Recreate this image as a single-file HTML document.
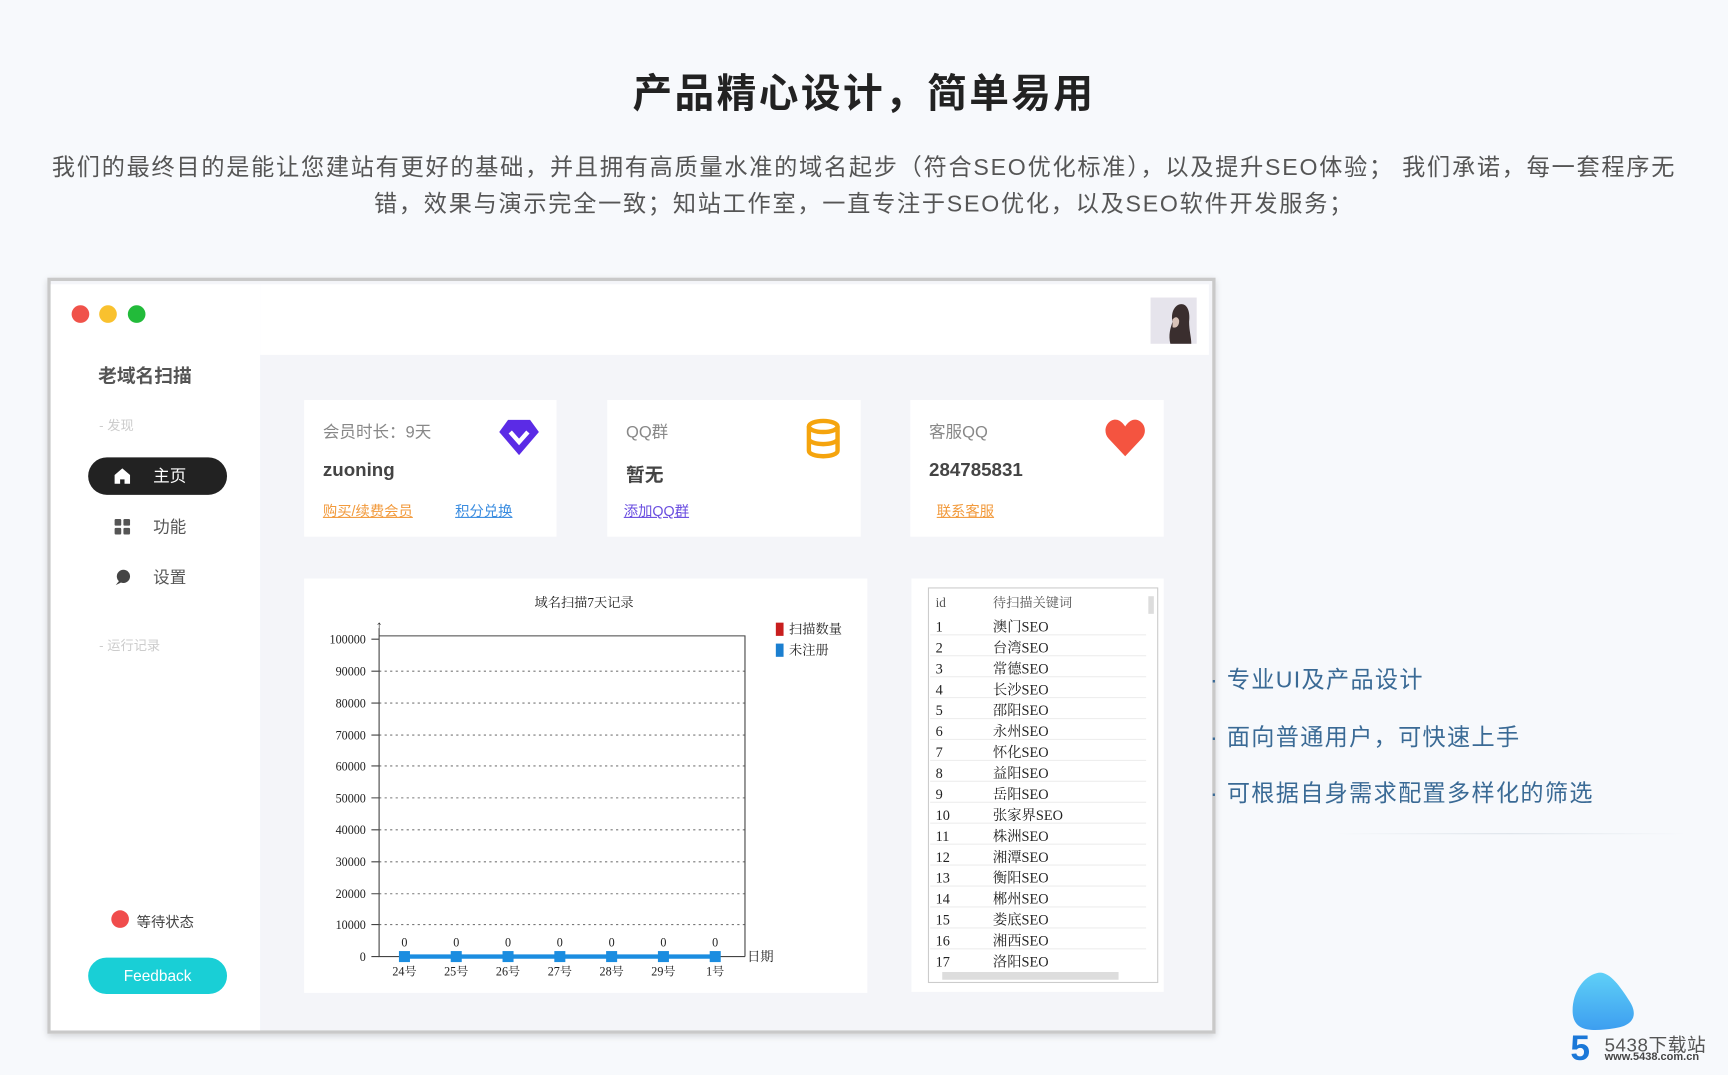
<!DOCTYPE html>
<html><head><meta charset="utf-8"><style>
*{margin:0;padding:0;box-sizing:border-box}
html,body{width:1728px;height:1074px;overflow:hidden;background:#f7f9fc;font-family:"Liberation Sans","Noto Sans CJK SC",sans-serif}
#w{position:absolute;left:0;top:0;width:1568px;height:975px;transform:scale(1.10204);transform-origin:0 0}
.a{position:absolute;white-space:nowrap}
h1{position:absolute;left:0;width:1568px;top:56px;text-align:center;font-size:36px;font-weight:bold;color:#222;letter-spacing:2.2px}
.p{position:absolute;left:0;width:1568px;text-align:center;font-size:21px;color:#555;line-height:33px;top:136px;letter-spacing:1.6px;white-space:nowrap}
.win{position:absolute;left:43px;top:252px;width:1060px;height:686px;border:3px solid #c9c9c9;background:#f4f5f9;box-shadow:0 2px 6px rgba(0,0,0,.15)}
.card{position:absolute;background:#fff}
.lb{font-size:15px;color:#888}
.vl{font-size:17px;color:#444;font-weight:bold}
.ln{font-size:13px;text-decoration:underline}
.bl{font-size:21px;color:#3a6a95;letter-spacing:1.2px}
</style></head><body><div id="w">
<h1>产品精心设计，简单易用</h1>
<div class="p">我们的最终目的是能让您建站有更好的基础，并且拥有高质量水准的域名起步（符合SEO优化标准），以及提升SEO体验； 我们承诺，每一套程序无<br>错，效果与演示完全一致；知站工作室，一直专注于SEO优化，以及SEO软件开发服务；</div>

<div class="win">
 <div class="a" style="left:0;top:3px;width:190px;height:677px;background:#fff"></div>
 <div class="a" style="left:190px;top:3px;width:861px;height:64px;background:#fff"></div>
</div>
<div class="a" style="left:65px;top:277px;width:16px;height:16px;border-radius:8px;background:#f0524a"></div>
<div class="a" style="left:90px;top:277px;width:16px;height:16px;border-radius:8px;background:#f9c12e"></div>
<div class="a" style="left:116px;top:277px;width:16px;height:16px;border-radius:8px;background:#22bb3a"></div>
<div class="a" style="left:89px;top:327px;font-size:17px;font-weight:bold;color:#555">老域名扫描</div>
<div class="a" style="left:90px;top:377px;font-size:12px;color:#ccc">- 发现</div>
<div class="a" style="left:80px;top:415px;width:126px;height:34px;border-radius:17px;background:#222"></div>
<svg class="a" style="left:103px;top:424px" width="16" height="16" viewBox="0 0 16 16"><path d="M8 1L1 7v8h5v-4h4v4h5V7z" fill="#fff"/></svg>
<div class="a" style="left:139px;top:421px;font-size:15px;color:#fff">主页</div>
<svg class="a" style="left:103px;top:470px" width="16" height="16" viewBox="0 0 16 16" fill="#555"><rect x="1" y="1" width="6" height="6" rx="1"/><rect x="9" y="1" width="6" height="6" rx="1"/><rect x="1" y="9" width="6" height="6" rx="1"/><rect x="9" y="9" width="6" height="6" rx="1"/></svg>
<div class="a" style="left:139px;top:467px;font-size:15px;color:#555">功能</div>
<svg class="a" style="left:103px;top:516px" width="16" height="16"><circle cx="9" cy="7" r="6" fill="#444"/><path d="M2 15l4-5 2 2z" fill="#444"/></svg>
<div class="a" style="left:139px;top:513px;font-size:15px;color:#555">设置</div>
<div class="a" style="left:90px;top:577px;font-size:12px;color:#ccc">- 运行记录</div>
<div class="a" style="left:101px;top:826px;width:16px;height:16px;border-radius:8px;background:#f04c4c"></div>
<div class="a" style="left:124px;top:826px;font-size:13px;color:#444">等待状态</div>
<div class="a" style="left:80px;top:869px;width:126px;height:33px;border-radius:17px;background:#19cfd6;color:#fff;font-size:14px;text-align:center;line-height:33px">Feedback</div>
<svg class="a" style="left:1044px;top:270px" width="42" height="42"><rect width="42" height="42" fill="#e6e4ec"/><path d="M18 42c-2-8 0-14 2-20-2-8 2-16 8-16 6 0 8 8 7 16 0 8 2 14 2 20z" fill="#3a2e2e"/><path d="M20 20c2-3 5-3 6 1 0 5-3 7-6 6z" fill="#d8c2b8"/></svg>

<div class="card" style="left:276px;top:363px;width:229px;height:124px">
 <div class="a lb" style="left:17px;top:18px">会员时长：9天</div>
 <div class="a vl" style="left:17px;top:54px">zuoning</div>
 <div class="a ln" style="left:17px;top:90px;color:#f29a3c">购买/续费会员</div>
 <div class="a ln" style="left:137px;top:90px;color:#3b8de0">积分兑换</div>
 <svg class="a" style="left:176px;top:16px" width="38" height="36" viewBox="0 0 38 36"><path d="M9 2h20l8 11-18 21L1 13z" fill="#5b2be6"/><path d="M11 13l8 9 8-9" stroke="#fff" stroke-width="4" fill="none"/></svg>
</div>
<div class="card" style="left:551px;top:363px;width:230px;height:124px">
 <div class="a lb" style="left:17px;top:18px">QQ群</div>
 <div class="a vl" style="left:17px;top:54px">暂无</div>
 <div class="a ln" style="left:15px;top:90px;color:#6a4ee0">添加QQ群</div>
 <svg class="a" style="left:180px;top:16px" width="32" height="38" viewBox="0 0 32 38"><g fill="none" stroke="#f5a40d" stroke-width="4"><ellipse cx="16" cy="8" rx="13" ry="5"/><path d="M3 8v22c0 3 6 5 13 5s13-2 13-5V8M3 19c0 3 6 5 13 5s13-2 13-5"/></g></svg>
</div>
<div class="card" style="left:826px;top:363px;width:230px;height:124px">
 <div class="a lb" style="left:17px;top:18px">客服QQ</div>
 <div class="a vl" style="left:17px;top:54px">284785831</div>
 <div class="a ln" style="left:24px;top:90px;color:#f29a3c">联系客服</div>
 <svg class="a" style="left:176px;top:16px" width="38" height="36" viewBox="0 0 38 36"><path d="M19 35L4 19C-3 11 4 0 12 2c3 1 5 3 7 6 2-3 4-5 7-6 8-2 15 9 8 17z" fill="#f45440"/></svg>
</div>

<div class="card" style="left:276px;top:525px;width:511px;height:376px"></div>
<svg class="a" style="left:276px;top:525px" width="511" height="376" font-family="Liberation Serif,Noto Serif CJK SC,serif" font-size="11" fill="#222">
 <text x="254" y="26" text-anchor="middle" font-size="12">域名扫描7天记录</text>
 <text x="68" y="47" font-size="13" text-anchor="middle">↑</text>
 <rect x="428" y="40" width="7" height="12" fill="#c81e1e"/><text x="440" y="50" font-size="12">扫描数量</text>
 <rect x="428" y="59" width="7" height="12" fill="#1b7fd0"/><text x="440" y="69" font-size="12">未注册</text>
 <g stroke="#777" stroke-dasharray="2 3">
  <line x1="68" x2="400" y1="84" y2="84"/><line x1="68" x2="400" y1="113" y2="113"/><line x1="68" x2="400" y1="142" y2="142"/><line x1="68" x2="400" y1="170" y2="170"/><line x1="68" x2="400" y1="199" y2="199"/><line x1="68" x2="400" y1="228" y2="228"/><line x1="68" x2="400" y1="257" y2="257"/><line x1="68" x2="400" y1="286" y2="286"/><line x1="68" x2="400" y1="314" y2="314"/>
 </g>
 <g text-anchor="end">
 <text x="56" y="59">100000</text><text x="56" y="88">90000</text><text x="56" y="117">80000</text><text x="56" y="146">70000</text><text x="56" y="174">60000</text><text x="56" y="203">50000</text><text x="56" y="232">40000</text><text x="56" y="261">30000</text><text x="56" y="290">20000</text><text x="56" y="318">10000</text><text x="56" y="347">0</text></g>
 <path d="M68 52h332v291M68 45v298h332" stroke="#444" fill="none"/>
 <path d="M61 55h7M61 84h7M61 113h7M61 142h7M61 170h7M61 199h7M61 228h7M61 257h7M61 286h7M61 314h7M61 343h7" stroke="#444"/>
 <path d="M91 343h282" stroke="#1b8de0" stroke-width="4"/>
 <g fill="#1b8de0"><rect x="86" y="338" width="10" height="10"/><rect x="133" y="338" width="10" height="10"/><rect x="180" y="338" width="10" height="10"/><rect x="227" y="338" width="10" height="10"/><rect x="274" y="338" width="10" height="10"/><rect x="321" y="338" width="10" height="10"/><rect x="368" y="338" width="10" height="10"/></g>
 <g text-anchor="middle"><text x="91" y="334">0</text><text x="138" y="334">0</text><text x="185" y="334">0</text><text x="232" y="334">0</text><text x="279" y="334">0</text><text x="326" y="334">0</text><text x="373" y="334">0</text>
 <text x="91" y="360">24号</text><text x="138" y="360">25号</text><text x="185" y="360">26号</text><text x="232" y="360">27号</text><text x="279" y="360">28号</text><text x="326" y="360">29号</text><text x="373" y="360">1号</text></g>
 <text x="402" y="347" font-size="12">日期</text>
</svg>

<div class="card" style="left:827px;top:525px;width:229px;height:375px"></div>
<svg class="a" style="left:827px;top:525px" width="229" height="375" font-family="Liberation Serif,Noto Serif CJK SC,serif" font-size="12" fill="#222">
 <rect x="15.5" y="8.5" width="208" height="358" fill="none" stroke="#ccc"/>
 <text x="22" y="26" fill="#555">id</text><text x="74" y="26" fill="#555">待扫描关键词</text>
 <rect x="215" y="16" width="5" height="16" fill="#ddd"/>
 <rect x="28" y="357" width="160" height="7" fill="#ddd"/>
 <g stroke="#eee"><line x1="17" x2="213" y1="51" y2="51"/><line x1="17" x2="213" y1="70" y2="70"/><line x1="17" x2="213" y1="89" y2="89"/><line x1="17" x2="213" y1="108" y2="108"/><line x1="17" x2="213" y1="127" y2="127"/><line x1="17" x2="213" y1="146" y2="146"/><line x1="17" x2="213" y1="165" y2="165"/><line x1="17" x2="213" y1="184" y2="184"/><line x1="17" x2="213" y1="203" y2="203"/><line x1="17" x2="213" y1="222" y2="222"/><line x1="17" x2="213" y1="241" y2="241"/><line x1="17" x2="213" y1="260" y2="260"/><line x1="17" x2="213" y1="279" y2="279"/><line x1="17" x2="213" y1="298" y2="298"/><line x1="17" x2="213" y1="317" y2="317"/><line x1="17" x2="213" y1="336" y2="336"/></g>
 <g font-size="13">
 <text x="22" y="48">1</text><text x="74" y="48">澳门SEO</text>
 <text x="22" y="67">2</text><text x="74" y="67">台湾SEO</text>
 <text x="22" y="86">3</text><text x="74" y="86">常德SEO</text>
 <text x="22" y="105">4</text><text x="74" y="105">长沙SEO</text>
 <text x="22" y="124">5</text><text x="74" y="124">邵阳SEO</text>
 <text x="22" y="143">6</text><text x="74" y="143">永州SEO</text>
 <text x="22" y="162">7</text><text x="74" y="162">怀化SEO</text>
 <text x="22" y="181">8</text><text x="74" y="181">益阳SEO</text>
 <text x="22" y="200">9</text><text x="74" y="200">岳阳SEO</text>
 <text x="22" y="219">10</text><text x="74" y="219">张家界SEO</text>
 <text x="22" y="238">11</text><text x="74" y="238">株洲SEO</text>
 <text x="22" y="257">12</text><text x="74" y="257">湘潭SEO</text>
 <text x="22" y="276">13</text><text x="74" y="276">衡阳SEO</text>
 <text x="22" y="295">14</text><text x="74" y="295">郴州SEO</text>
 <text x="22" y="314">15</text><text x="74" y="314">娄底SEO</text>
 <text x="22" y="333">16</text><text x="74" y="333">湘西SEO</text>
 <text x="22" y="352">17</text><text x="74" y="352">洛阳SEO</text></g>
</svg>

<div class="a bl" style="left:1098px;top:601px">· 专业UI及产品设计</div>
<div class="a bl" style="left:1098px;top:653px">· 面向普通用户，可快速上手</div>
<div class="a bl" style="left:1098px;top:704px">· 可根据自身需求配置多样化的筛选</div>
<div class="a" style="left:1210px;top:756px;width:320px;height:1px;background:linear-gradient(90deg,#f7f9fc,#dde3ea,#f7f9fc)"></div>

<svg class="a" style="left:1425px;top:880px" width="65" height="62" viewBox="0 0 65 62"><defs><linearGradient id="g" x1="0" y1="0" x2="0" y2="1"><stop offset="0" stop-color="#5fd0f7"/><stop offset="1" stop-color="#3d9ef0"/></linearGradient></defs><path d="M24 3c10-3 20 10 30 26 8 13 2 22-14 24-20 3-38 4-38-16C2 20 12 6 24 3z" fill="url(#g)"/></svg>
<div class="a" style="left:1425px;top:933px;font-size:32px;font-weight:bold;color:#1b78d8;font-family:'Liberation Sans',sans-serif">5</div>
<div class="a" style="left:1456px;top:934px;font-size:17px;color:#555;letter-spacing:0.5px">5438下载站</div>
<div class="a" style="left:1456px;top:954px;font-size:10px;color:#444;font-weight:bold">www.5438.com.cn</div>
</div></body></html>
